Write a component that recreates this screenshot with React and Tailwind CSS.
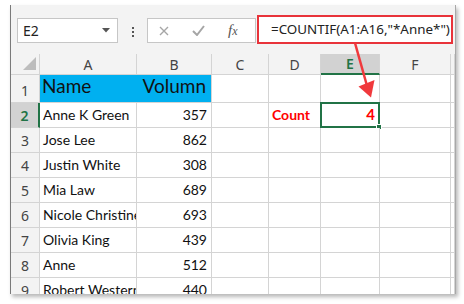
import React from "react";

const COLS = [
  { k: "rh", w: "w-[29px]" },
  { k: "A", w: "w-[97px]" },
  { k: "B", w: "w-[75px]" },
  { k: "C", w: "w-[57px]" },
  { k: "D", w: "w-[52px]" },
  { k: "E", w: "w-[59px]" },
  { k: "F", w: "w-[71px]" },
  { k: "G", w: "flex-1" },
];

const DATA = [
  ["Anne K Green", "357"],
  ["Jose Lee", "862"],
  ["Justin White", "308"],
  ["Mia Law", "689"],
  ["Nicole Christine", "693"],
  ["Olivia King", "439"],
  ["Anne", "512"],
  ["Robert  Western", "440"],
];

const cellFont = { fontFamily: "Lato, 'Liberation Sans', sans-serif" };
const uiFont = { fontFamily: "'Noto Sans', 'Open Sans', sans-serif" };

function HeaderRow() {
  return (
    <div className="flex h-[21px] shrink-0">
      <div className="w-[29px] h-full border-r border-b border-[#d4d4d4] bg-[#f3f3f3] relative">
        <svg className="absolute left-[12px] top-[3px]" width="14" height="14" viewBox="0 0 14 14">
          <polygon points="13,0 13,13 0,13" fill="#bdbdbd" />
        </svg>
      </div>
      {COLS.slice(1).map((c) => {
        const sel = c.k === "E";
        return (
          <div
            key={c.k}
            className={`${c.w} h-full border-r border-[#d4d4d4] flex items-center justify-center text-[14px] ${
              sel
                ? "bg-[#d2d2d2] text-[#217346] font-semibold border-b-2 border-b-[#217346]"
                : "bg-[#f3f3f3] text-[#444] border-b border-b-[#d4d4d4]"
            }`}
            style={uiFont}
          >
            {c.k === "G" ? "" : c.k}
          </div>
        );
      })}
    </div>
  );
}

function Row({ n, h, children }) {
  const sel = n === 2;
  return (
    <div className={`flex ${h} shrink-0`}>
      <div
        className={`w-[29px] h-full border-b border-[#d4d4d4] flex items-end justify-center pb-[1px] text-[14px] ${
          sel
            ? "bg-[#d2d2d2] text-[#217346] font-semibold border-r-2 border-r-[#217346]"
            : "bg-[#f3f3f3] text-[#444] border-r border-r-[#d4d4d4]"
        }`}
        style={uiFont}
      >
        {n}
      </div>
      {children}
    </div>
  );
}

function Cell({ w, className = "", children, style }) {
  return (
    <div
      className={`${w} h-full border-r border-b border-[#d4d4d4] bg-white overflow-hidden whitespace-nowrap flex items-end pb-[2px] ${className}`}
      style={style}
    >
      {children}
    </div>
  );
}

export default function App() {
  return (
    <div className="w-[464px] h-[304px] bg-white relative overflow-hidden">
      <div className="pt-[5px] pl-[10px]">
        <div className="w-[446px] h-[289px] border-l border-l-[#7a7a7a] border-r border-r-[#a8a8a8] bg-[#f3f3f3] shadow-[2px_3px_4px_rgba(0,0,0,0.28)] overflow-hidden flex flex-col">
          {/* Formula bar */}
          <div className="h-[49px] shrink-0 flex items-start relative">
            <div
              className="mt-[13px] ml-[6px] w-[101px] h-[25px] bg-white border border-[#c6c6c6] flex items-center justify-between pl-[5px] pr-[7px] text-[14px] text-[#222]"
              style={uiFont}
            >
              <span>E2</span>
              <svg width="8" height="5" viewBox="0 0 8 5">
                <polygon points="0,0 8,0 4,4.5" fill="#555" />
              </svg>
            </div>
            <div className="mt-[22px] ml-[14px] flex flex-col gap-[2px]">
              <div className="w-[2px] h-[2px] bg-[#555]" />
              <div className="w-[2px] h-[2px] bg-[#555]" />
              <div className="w-[2px] h-[2px] bg-[#555]" />
            </div>
            <div className="mt-[13px] ml-[13px] w-[109px] h-[25px] bg-white border border-[#c6c6c6] flex items-center">
              <svg className="ml-[11px]" width="10" height="10" viewBox="0 0 10 10">
                <path d="M1 1 L9 9 M9 1 L1 9" stroke="#a6a6a6" strokeWidth="1.4" />
              </svg>
              <svg className="ml-[23px]" width="13" height="11" viewBox="0 0 13 11">
                <path d="M1 6 L5 10 L12 1" stroke="#a6a6a6" strokeWidth="2" fill="none" />
              </svg>
              <span
                className="ml-[23px] text-[15px] italic text-[#555] leading-none"
                style={{ fontFamily: "'Liberation Serif', 'DejaVu Serif', serif" }}
              >
                f<span className="text-[12px]">x</span>
              </span>
            </div>
            <div
              className="mt-[10px] ml-[1px] w-[196px] h-[29px] border-2 border-[#e8333a] bg-white flex items-center pl-[12px] text-[13.4px] text-[#222] whitespace-nowrap overflow-hidden"
              style={uiFont}
            >
              =COUNTIF(A1:A16,"*Anne*")
            </div>
          </div>

          {/* Grid */}
          <div className="flex flex-col bg-white">
            <HeaderRow />
            <Row n={1} h="h-[28px]">
              <div
                className="w-[97px] h-full border-b border-[#d4d4d4] bg-[#00b0f0] flex items-end pl-[2px] pb-[2px] text-[19px] text-[#111]"
                style={cellFont}
              >
                Name
              </div>
              <div
                className="w-[75px] h-full border-r border-b border-[#d4d4d4] bg-[#00b0f0] flex items-end justify-end pr-[5px] pb-[2px] text-[19px] text-[#111]"
                style={cellFont}
              >
                Volumn
              </div>
              <Cell w="w-[57px]" />
              <Cell w="w-[52px]" />
              <Cell w="w-[59px]" />
              <Cell w="w-[71px]" />
              <Cell w="flex-1" />
            </Row>
            {DATA.map(([name, vol], i) => {
              const n = i + 2;
              return (
                <Row key={n} n={n} h="h-[25px]">
                  <Cell w="w-[97px]" className="pl-[3px] text-[14px] text-[#111]" style={cellFont}>
                    {name}
                  </Cell>
                  <Cell w="w-[75px]" className="justify-end pr-[4px] text-[14px] text-[#111]" style={cellFont}>
                    {vol}
                  </Cell>
                  <Cell w="w-[57px]" />
                  <Cell
                    w="w-[52px]"
                    className="pl-[3px] text-[14px] font-bold text-[#ff0000]"
                    style={cellFont}
                  >
                    {n === 2 ? "Count" : ""}
                  </Cell>
                  <Cell
                    w="w-[59px]"
                    className="justify-end pr-[4px] text-[15px] font-bold text-[#ff0000] relative !overflow-visible"
                    style={cellFont}
                  >
                    {n === 2 ? "4" : ""}
                    {n === 2 && (
                      <>
                        <div className="absolute -left-[1px] -top-[1px] w-[60px] h-[26px] border-2 border-[#217346]" />
                        <div className="absolute -right-[3px] -bottom-[3px] w-[6px] h-[6px] bg-[#217346] border border-white" />
                      </>
                    )}
                  </Cell>
                  <Cell w="w-[71px]" />
                  <Cell w="flex-1" />
                </Row>
              );
            })}
          </div>
        </div>
      </div>

      {/* Arrow overlay */}
      <svg className="absolute left-0 top-0 pointer-events-none" width="464" height="304" viewBox="0 0 464 304">
        <path d="M355 43 L366.5 84" stroke="#f0393c" strokeWidth="2.5" fill="none" />
        <polygon points="358.5,86.5 374.5,80 371,97.5" fill="#f0393c" />
      </svg>
    </div>
  );
}
